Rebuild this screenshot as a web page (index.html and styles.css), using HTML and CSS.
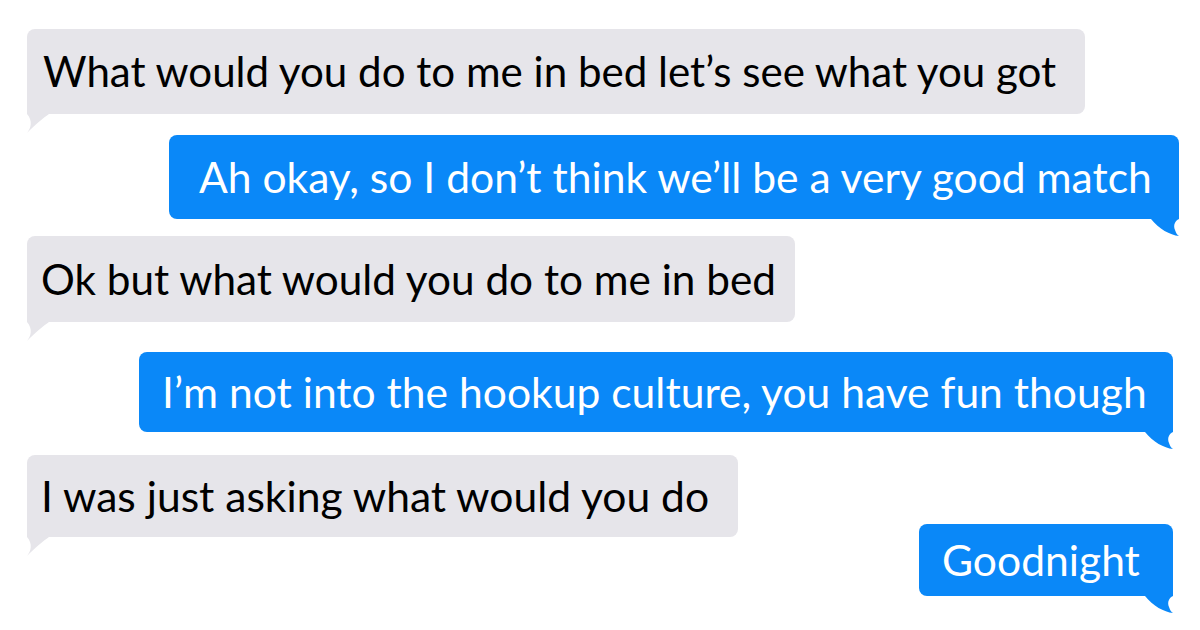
FILE: index.html
```html
<!DOCTYPE html>
<html>
<head>
<meta charset="utf-8">
<link rel="stylesheet" href="styles.css">
</head>
<body>
<div class="chat">
  <div class="bubble in b1"><span>What would you do to me in bed let’s see what you got</span>
    <svg class="tail" viewBox="0 0 24 30" width="24" height="30"><path d="M0,0 H22 V10 C16,14 8,21 0,29 C4,24 6,17 0,10 Z"/></svg>
  </div>
  <div class="bubble out b2"><span>Ah okay, so I don’t think we’ll be a very good match</span>
    <svg class="tail" viewBox="0 0 30 30" width="30" height="30"><path d="M2,0 H30 V10 C26,12 24,16 26,21 C27,24 28,26 30,27 C21,26 10,20 2,10 Z"/></svg>
  </div>
  <div class="bubble in b3"><span>Ok but what would you do to me in bed</span>
    <svg class="tail" viewBox="0 0 24 30" width="24" height="30"><path d="M0,0 H22 V10 C16,14 8,21 0,29 C4,24 6,17 0,10 Z"/></svg>
  </div>
  <div class="bubble out b4"><span>I’m not into the hookup culture, you have fun though</span>
    <svg class="tail" viewBox="0 0 30 30" width="30" height="30"><path d="M2,0 H30 V10 C26,12 24,16 26,21 C27,24 28,26 30,27 C21,26 10,20 2,10 Z"/></svg>
  </div>
  <div class="bubble in b5"><span>I was just asking what would you do</span>
    <svg class="tail" viewBox="0 0 24 30" width="24" height="30"><path d="M0,0 H22 V10 C16,14 8,21 0,29 C4,24 6,17 0,10 Z"/></svg>
  </div>
  <div class="bubble out b6"><span>Goodnight</span>
    <svg class="tail" viewBox="0 0 30 30" width="30" height="30"><path d="M2,0 H30 V10 C26,12 24,16 26,21 C27,24 28,26 30,27 C21,26 10,20 2,10 Z"/></svg>
  </div>
</div>
</body>
</html>
```
FILE: styles.css
```css
html, body {
  margin: 0;
  padding: 0;
  background: #ffffff;
}
body {
  width: 1200px;
  height: 630px;
  overflow: hidden;
  font-family: "Lato", "Open Sans", sans-serif;
}
.chat {
  display: flex;
  flex-direction: column;
  align-items: flex-start;
  padding: 29px 21px 0 27px;
}
.bubble {
  position: relative;
  display: flex;
  align-items: center;
  box-sizing: border-box;
  border-radius: 8px;
  white-space: nowrap;
  line-height: 1.2;
}
.bubble.in {
  background: #e6e5ea;
  color: #000;
}
.bubble.in .tail {
  position: absolute;
  left: 0;
  top: calc(100% - 10px);
  fill: #e6e5ea;
}
.bubble.out {
  background: #0a88f8;
  color: #fff;
  align-self: flex-end;
  margin-right: 6px;
}
.bubble.out .tail {
  position: absolute;
  right: 0;
  top: calc(100% - 10px);
  fill: #0a88f8;
}
.b1 { width: 1058px; height: 85px; padding-left: 16px; font-size: 42.1px; }
.b2 { width: 1010px; height: 84px; padding-left: 30px; font-size: 42.6px; margin-top: 21px; margin-right: 0 !important; }
.b3 { width: 768px; height: 86px; padding-left: 14px; font-size: 42.3px; margin-top: 17px; }
.b4 { width: 1034px; height: 80px; padding-left: 23px; font-size: 42.6px; margin-top: 30px; }
.b5 { width: 711px; height: 82px; padding-left: 14px; font-size: 42.6px; margin-top: 23px; }
.b6 { width: 254px; height: 72px; padding-left: 23px; font-size: 42.6px; margin-top: -13px; }
```
